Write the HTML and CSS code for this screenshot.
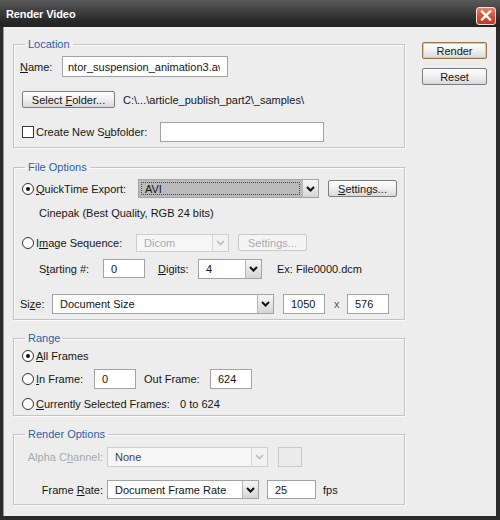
FILE: index.html
```html
<!DOCTYPE html>
<html>
<head>
<meta charset="utf-8">
<title>Render Video</title>
<link rel="stylesheet" href="styles.css">
</head>
<body>
<div class="window">
  <div class="titlebar">
    <span class="title">Render Video</span>
    <span class="close"><svg width="12" height="11" viewBox="0 0 12 11"><path d="M2 1.5 L10 9.5 M10 1.5 L2 9.5" stroke="#fff" stroke-width="2.4" stroke-linecap="square"/></svg></span>
  </div>
  <div class="client">
    <div class="main">
      <fieldset class="group g-loc">
        <legend>Location</legend>
        <div class="row r-name">
          <span class="lbl w-name"><u>N</u>ame:</span>
          <span class="field f-name"><span class="clip">ntor_suspension_animation3.avi</span></span>
        </div>
        <div class="row r-folder">
          <span class="btn b-folder"><span>Select <u>F</u>older...</span></span>
          <span class="path">C:\...\article_publish_part2\_samples\</span>
        </div>
        <div class="row r-sub">
          <span class="opt w-sub"><span class="check"></span><span>Create New S<u>u</u>bfolder:</span></span>
          <span class="field f-sub"></span>
        </div>
      </fieldset>

      <fieldset class="group g-file">
        <legend>File Options</legend>
        <div class="row r-qt">
          <span class="opt w-qt"><span class="radio on"></span><span><u>Q</u>uickTime Export:</span></span>
          <span class="combo c-avi focus"><span class="cval"><span class="dots">AVI</span></span><span class="arrow"><svg width="9" height="6" viewBox="0 0 9 6"><path d="M1 1 L4.5 4.5 L8 1" fill="none" stroke="#111" stroke-width="2"/></svg></span></span>
          <span class="btn b-set"><span><u>S</u>ettings...</span></span>
        </div>
        <div class="row r-cine">
          <span class="note">Cinepak (Best Quality, RGB 24 bits)</span>
        </div>
        <div class="row r-img">
          <span class="opt w-img"><span class="radio"></span><span>I<u>m</u>age Sequence:</span></span>
          <span class="combo c-dicom disabled"><span class="cval">Dicom</span><span class="arrow"><svg width="9" height="6" viewBox="0 0 9 6"><path d="M1 1 L4.5 4.5 L8 1" fill="none" stroke="#bbb" stroke-width="1.6"/></svg></span></span>
          <span class="btn b-set2 disabled"><span>Settings...</span></span>
        </div>
        <div class="row r-start">
          <span class="lbl w-start">S<u>t</u>arting #:</span>
          <span class="field f-start">0</span>
          <span class="lbl w-digits"><u>D</u>igits:</span>
          <span class="combo c-digits"><span class="cval">4</span><span class="arrow"><svg width="9" height="6" viewBox="0 0 9 6"><path d="M1 1 L4.5 4.5 L8 1" fill="none" stroke="#111" stroke-width="2"/></svg></span></span>
          <span class="ex">Ex: File0000.dcm</span>
        </div>
        <div class="row r-size">
          <span class="lbl w-size">Si<u>z</u>e:</span>
          <span class="combo c-size"><span class="cval">Document Size</span><span class="arrow"><svg width="9" height="6" viewBox="0 0 9 6"><path d="M1 1 L4.5 4.5 L8 1" fill="none" stroke="#111" stroke-width="2"/></svg></span></span>
          <span class="field f-w">1050</span>
          <span class="times">x</span>
          <span class="field f-h">576</span>
        </div>
      </fieldset>

      <fieldset class="group g-range">
        <legend>Range</legend>
        <div class="row r-all">
          <span class="opt"><span class="radio on"></span><span><u>A</u>ll Frames</span></span>
        </div>
        <div class="row r-in">
          <span class="opt w-in"><span class="radio"></span><span><u>I</u>n Frame:</span></span>
          <span class="field f-in">0</span>
          <span class="lbl w-out">Out Frame:</span>
          <span class="field f-out">624</span>
        </div>
        <div class="row r-cur">
          <span class="opt w-cur"><span class="radio"></span><span><u>C</u>urrently Selected Frames:</span></span>
          <span>0 to 624</span>
        </div>
      </fieldset>

      <fieldset class="group g-render">
        <legend>Render Options</legend>
        <div class="row r-alpha">
          <span class="lbl w-ro dim">Alpha C<u>h</u>annel:</span>
          <span class="combo c-alpha disabled"><span class="cval dark">None</span><span class="arrow"><svg width="9" height="6" viewBox="0 0 9 6"><path d="M1 1 L4.5 4.5 L8 1" fill="none" stroke="#bbb" stroke-width="1.6"/></svg></span></span>
          <span class="swatch"></span>
        </div>
        <div class="row r-rate">
          <span class="lbl w-ro">Frame <u>R</u>ate:</span>
          <span class="combo c-rate"><span class="cval">Document Frame Rate</span><span class="arrow"><svg width="9" height="6" viewBox="0 0 9 6"><path d="M1 1 L4.5 4.5 L8 1" fill="none" stroke="#111" stroke-width="2"/></svg></span></span>
          <span class="field f-fps">25</span>
          <span class="fps">fps</span>
        </div>
      </fieldset>
    </div>
    <div class="side">
      <span class="btn b-render"><span>Render</span></span>
      <span class="btn b-reset"><span>Reset</span></span>
    </div>
  </div>
</div>
</body>
</html>
```

FILE: styles.css
```css
* { box-sizing: border-box; }
html, body { margin: 0; padding: 0; }
body {
  font-family: "Liberation Sans", Arial, sans-serif;
  font-size: 11px;
  color: #151515;
  background: #2a2a2a;
}
u { text-decoration: underline; text-underline-offset: 1px; }

.window {
  width: 500px;
  height: 520px;
  background: #2b2b2b;
  display: flex;
  flex-direction: column;
}

.titlebar {
  height: 27px;
  flex: none;
  display: flex;
  align-items: center;
  justify-content: space-between;
  padding: 0 4px 0 6px;
  background: linear-gradient(#5a5a5a, #404040 40%, #2a2a2a 75%, #222);
  color: #fff;
}
.title { font-weight: bold; font-size: 11px; letter-spacing: -0.1px; }
.close {
  width: 20px;
  height: 18px;
  margin-top: 4px;
  display: flex;
  align-items: center;
  justify-content: center;
  border: 1px solid #f2e0dc;
  border-radius: 3px;
  background: linear-gradient(#e8826e, #d44b33 55%, #c03a24);
}

.client {
  flex: 1;
  margin: 0 4px 6px 3px;
  background: #ededed;
  border-left: 1px solid #9a9a9a;
  display: flex;
  gap: 17px;
  padding: 10px 0 0 9px;
}

.main { width: 392px; flex: none; }

.side {
  display: flex;
  flex-direction: column;
  gap: 9px;
  padding-top: 5px;
}

/* group boxes */
.group {
  margin: 0 0 11px;
  padding: 0 6px;
  border: 1px solid #c4c4c4;
  box-shadow: inset 1px 1px 0 #fafafa, 1px 1px 0 #fafafa;
  min-width: 0;
}
.group legend {
  margin-left: 5px;
  padding: 0 3px;
  line-height: 14px;
  color: #2d5da9;
}
.g-loc { padding-top: 5px; padding-bottom: 5px; margin-bottom: 12px; }
.g-file { padding-top: 4px; padding-bottom: 5px; }
.g-range { padding-top: 0; padding-bottom: 2px; }
.g-render { padding-top: 5px; padding-bottom: 4px; }

.row {
  display: flex;
  align-items: center;
  height: 21px;
  white-space: nowrap;
}

/* location rows */
.r-folder { margin-top: 12px; padding-left: 2px; }
.r-sub { margin-top: 11px; padding-left: 2px; }
.w-name { width: 42px; }
.path { margin-left: 8px; }
.w-sub { width: 138px; }
.clip { display: block; width: 152px; overflow: hidden; }

/* file options rows */
.r-qt { padding-left: 2px; }
.r-cine { margin-top: 3px; padding-left: 19px; }
.r-img { margin-top: 9px; padding-left: 2px; }
.r-start { margin-top: 5px; padding-left: 19px; }
.r-size { margin-top: 14px; }
.w-qt { width: 116px; }
.w-img { width: 114px; }
.w-start { width: 64px; }
.w-digits { width: 40px; margin-left: 13px; }
.w-size { width: 32px; }
.ex { margin-left: 15px; }
.times { width: 13px; margin-left: 9px; color: #555; }

/* range rows */
.r-all { padding-left: 2px; }
.r-in { margin-top: 2px; padding-left: 2px; }
.r-cur { margin-top: 5px; padding-left: 2px; height: 19px; }
.w-in { width: 72px; }
.w-out { width: 66px; margin-left: 8px; }
.w-cur { width: 158px; }

/* render options rows */
.r-rate { margin-top: 12px; }
.w-ro { width: 84px; text-align: right; padding-right: 1px; }
.dim { color: #a9a9a9; }
.fps { margin-left: 7px; }

/* controls */
.opt { display: flex; align-items: center; }
.opt > span + span { margin-left: 2px; }

.radio {
  width: 12px;
  height: 12px;
  flex: none;
  border: 1px solid #333;
  border-radius: 50%;
  background: #fff;
  display: flex;
  align-items: center;
  justify-content: center;
}
.radio.on::after {
  content: "";
  width: 4px;
  height: 4px;
  border-radius: 50%;
  background: #111;
}
.check {
  width: 12px;
  height: 12px;
  flex: none;
  border: 1px solid #3a3a3a;
  background: #fff;
}

.field {
  height: 20px;
  border: 1px solid #a2a2a2;
  background: #fff;
  padding: 0 3px 0 7px;
  display: flex;
  align-items: center;
  overflow: hidden;
  flex: none;
}
.f-name { width: 166px; height: 21px; padding-left: 5px; }
.f-sub { width: 164px; }
.f-start { width: 42px; height: 19px; margin-left: 0; }
.f-w { width: 42px; margin-left: 9px; }
.f-h { width: 42px; }
.f-in { width: 42px; }
.f-out { width: 42px; }
.f-fps { width: 49px; height: 19px; margin-left: 8px; }

.combo {
  height: 20px;
  border: 1px solid #a2a2a2;
  background: #fff;
  display: flex;
  flex: none;
}
.cval {
  flex: 1;
  display: flex;
  align-items: center;
  padding-left: 7px;
  overflow: hidden;
}
.arrow {
  width: 16px;
  flex: none;
  display: flex;
  align-items: center;
  justify-content: center;
  border-left: 1px solid #b5b5b5;
  background: linear-gradient(#f6f6f6, #d6d6d6);
}
.c-avi { width: 181px; height: 19px; }
.c-avi .cval { background: #bbbbbb; padding: 2px; }
.dots {
  flex: 1;
  height: 100%;
  border: 1px dotted #444;
  display: flex;
  align-items: center;
  padding-left: 3px;
}
.c-dicom { width: 93px; height: 18px; }
.c-digits { width: 64px; }
.c-size { width: 222px; }
.c-alpha { width: 161px; margin-left: 3px; }
.c-rate { width: 152px; height: 19px; margin-left: 3px; }
.combo.disabled { border-color: #cdcdcd; background: #f6f6f6; color: #a9a9a9; }
.combo.disabled .arrow { border-left-color: #d6d6d6; background: #f2f2f2; }
.cval.dark { color: #444; }

.swatch {
  width: 24px;
  height: 20px;
  margin-left: 10px;
  border: 1px solid #c8c8c8;
  background: #ececec;
}

.btn {
  height: 17px;
  display: flex;
  align-items: center;
  justify-content: center;
  border: 1px solid #7c7c7c;
  border-radius: 2px;
  background: linear-gradient(#fefefe, #f0f0f0 50%, #d9d9d9);
  flex: none;
  color: #151515;
}
.btn.disabled { border-color: #c9c9c9; background: #f4f4f4; color: #aaa; }
.b-folder { width: 93px; }
.b-set { width: 69px; margin-left: 9px; }
.b-set2 { width: 69px; margin-left: 9px; }
.b-render {
  width: 65px;
  border-color: #9a7440;
  box-shadow: inset 0 0 0 1px #f2c48a;
}
.b-reset { width: 65px; }
```
